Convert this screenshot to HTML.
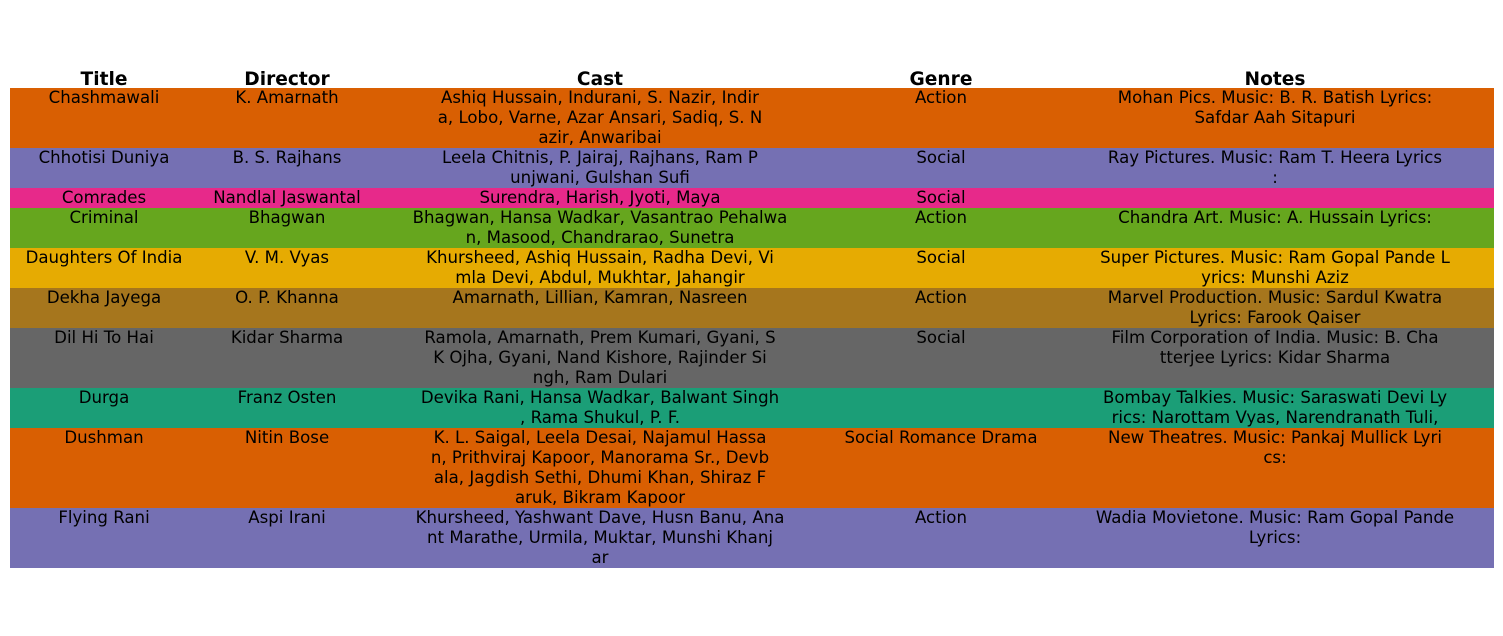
<!DOCTYPE html>
<html><head><meta charset="utf-8"><style>
body{margin:0;width:1503px;height:636px;background:#fff;position:relative;overflow:hidden;font-family:"DejaVu Sans","Liberation Sans",sans-serif;font-size:16.6px;color:#000}
.r{position:absolute;left:10px;width:1484px}
.c{position:absolute;top:0;text-align:center;line-height:20px;white-space:pre}
.h{font-weight:bold;position:absolute;top:70px;text-align:center;line-height:20px;font-size:18.6px}
</style></head><body>
<div class="h" style="left:10px;width:188px">Title</div>
<div class="h" style="left:198px;width:178px">Director</div>
<div class="h" style="left:376px;width:448px">Cast</div>
<div class="h" style="left:824px;width:234px">Genre</div>
<div class="h" style="left:1058px;width:434px">Notes</div>
<div id="t"></div>
<script>
var rows=[
[88,60,"#d95f02","Chashmawali","K. Amarnath","Ashiq Hussain, Indurani, S. Nazir, Indir\na, Lobo, Varne, Azar Ansari, Sadiq, S. N\nazir, Anwaribai","Action","Mohan Pics. Music: B. R. Batish Lyrics:\nSafdar Aah Sitapuri"],
[148,40,"#7570b3","Chhotisi Duniya","B. S. Rajhans","Leela Chitnis, P. Jairaj, Rajhans, Ram P\nunjwani, Gulshan Sufi","Social","Ray Pictures. Music: Ram T. Heera Lyrics\n:"],
[188,20,"#e7298a","Comrades","Nandlal Jaswantal","Surendra, Harish, Jyoti, Maya","Social",""],
[208,40,"#66a61e","Criminal","Bhagwan","Bhagwan, Hansa Wadkar, Vasantrao Pehalwa\nn, Masood, Chandrarao, Sunetra","Action","Chandra Art. Music: A. Hussain Lyrics:"],
[248,40,"#e6ab02","Daughters Of India","V. M. Vyas","Khursheed, Ashiq Hussain, Radha Devi, Vi\nmla Devi, Abdul, Mukhtar, Jahangir","Social","Super Pictures. Music: Ram Gopal Pande L\nyrics: Munshi Aziz"],
[288,40,"#a6761d","Dekha Jayega","O. P. Khanna","Amarnath, Lillian, Kamran, Nasreen","Action","Marvel Production. Music: Sardul Kwatra\nLyrics: Farook Qaiser"],
[328,60,"#666666","Dil Hi To Hai","Kidar Sharma","Ramola, Amarnath, Prem Kumari, Gyani, S\nK Ojha, Gyani, Nand Kishore, Rajinder Si\nngh, Ram Dulari","Social","Film Corporation of India. Music: B. Cha\ntterjee Lyrics: Kidar Sharma"],
[388,40,"#1b9e77","Durga","Franz Osten","Devika Rani, Hansa Wadkar, Balwant Singh\n, Rama Shukul, P. F.","","Bombay Talkies. Music: Saraswati Devi Ly\nrics: Narottam Vyas, Narendranath Tuli,"],
[428,80,"#d95f02","Dushman","Nitin Bose","K. L. Saigal, Leela Desai, Najamul Hassa\nn, Prithviraj Kapoor, Manorama Sr., Devb\nala, Jagdish Sethi, Dhumi Khan, Shiraz F\naruk, Bikram Kapoor","Social Romance Drama","New Theatres. Music: Pankaj Mullick Lyri\ncs:"],
[508,60,"#7570b3","Flying Rani","Aspi Irani","Khursheed, Yashwant Dave, Husn Banu, Ana\nnt Marathe, Urmila, Muktar, Munshi Khanj\nar","Action","Wadia Movietone. Music: Ram Gopal Pande\nLyrics:"]];
var cols=[[0,188],[188,178],[366,448],[814,234],[1048,434]];
var h="";
rows.forEach(function(r){
h+='<div class="r" style="top:'+r[0]+'px;height:'+r[1]+'px;background:'+r[2]+'">';
for(var i=0;i<5;i++){var t=r[3+i].replace(/&/g,"&amp;");h+='<div class="c" style="left:'+cols[i][0]+'px;width:'+cols[i][1]+'px">'+t+'</div>';}
h+='</div>';});
document.getElementById("t").innerHTML=h;
</script>
</body></html>
